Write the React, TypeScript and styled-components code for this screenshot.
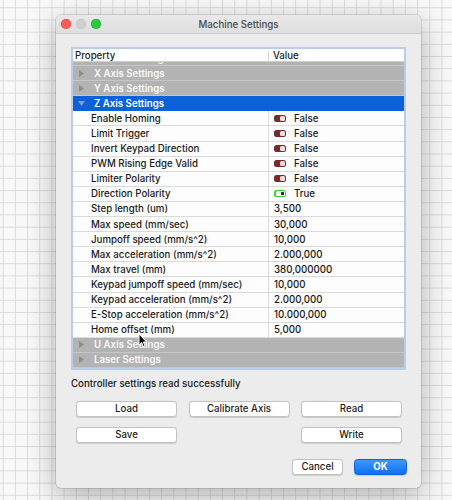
import React, { useLayoutEffect, useRef } from "react";
import styled, { createGlobalStyle } from "styled-components";

const Global = createGlobalStyle`
  html, body {
    margin: 0;
    padding: 0;
    height: 100%;
  }
  body {
    background-color: #f8f8f8;
    background-image:
      linear-gradient(to right, #dadada 1px, transparent 1px),
      linear-gradient(to bottom, #dadada 1px, transparent 1px);
    background-size: 12.19px 12.19px;
    background-position: 2.7px 7.3px;
    font-family: "Inter", "Liberation Sans", sans-serif;
    -webkit-font-smoothing: antialiased;
  }
`;

const Page = styled.div`
  padding: 15px 0 0 56px;
`;

const Window = styled.div`
  position: relative;
  width: 365px;
  height: 473px;
  background: #ececec;
  border-radius: 5px;
  box-shadow: 0 0 0 0.5px rgba(0, 0, 0, 0.22), 0 8px 30px rgba(0, 0, 0, 0.3);
  display: flex;
  flex-direction: column;
  overflow: hidden;
`;

const TitleBar = styled.div`
  position: relative;
  height: 18px;
  flex: none;
  background: linear-gradient(#e8e8e8, #dedede);
  border-bottom: 1px solid #cdcdcd;
  display: flex;
  align-items: center;
  justify-content: center;
`;

const Lights = styled.div`
  position: absolute;
  left: 5px;
  top: 4px;
  display: flex;
  gap: 5px;
`;

const Light = styled.span<{ $c: string; $b: string }>`
  width: 10px;
  height: 10px;
  border-radius: 50%;
  background: ${(p) => p.$c};
  box-shadow: inset 0 0 0 0.5px ${(p) => p.$b};
`;

const Title = styled.div`
  font-size: 9.7px;
  color: #4b4b4b;
  font-weight: 500;
`;

const Content = styled.div`
  flex: 1;
  display: flex;
  flex-direction: column;
  padding: 13px 14px 0 15px;
`;

const Table = styled.div`
  width: 331px;
  height: 319px;
  border: 2px solid #b9cde8;
  background: #ffffff;
  display: flex;
  flex-direction: column;
  flex: none;
`;

const Header = styled.div`
  height: 12px;
  flex: none;
  display: grid;
  grid-template-columns: 195px 1fr;
  border-bottom: 1px solid #cfcfcf;
  background: #fff;
  font-size: 9.7px;
  font-weight: 500;
  color: #1e1e1e;
`;

const HeadCell = styled.div<{ $divider?: boolean }>`
  display: flex;
  align-items: center;
  padding-left: ${(p) => (p.$divider ? "4px" : "2px")};
  border-left: ${(p) => (p.$divider ? "1px solid #d6d6d6" : "none")};
  margin-top: ${(p) => (p.$divider ? "2px" : "0")};
  line-height: 1;
  padding-bottom: ${(p) => (p.$divider ? "2px" : "0")};
`;

const Body = styled.div`
  flex: 1;
  overflow: hidden;
`;

const GroupRow = styled.div<{ $selected?: boolean }>`
  height: 15.1px;
  box-sizing: border-box;
  display: flex;
  align-items: center;
  background: ${(p) => (p.$selected ? "#0b61d8" : "#b3b3b3")};
  border-bottom: 1px solid ${(p) => (p.$selected ? "#0b61d8" : "#c6c6c6")};
  color: ${(p) => (p.$selected ? "#ffffff" : "#f8f8f8")};
  font-size: 9.7px;
  font-weight: 600;
`;

const Arrow = styled.span<{ $open?: boolean }>`
  width: 21px;
  flex: none;
  display: flex;
  justify-content: center;
  padding-right: 4px;
  box-sizing: border-box;
  svg {
    display: block;
  }
  color: ${(p) => (p.$open ? "#8d9cb6" : "#8c8c8c")};
`;

const ChildRow = styled.div`
  height: 15.1px;
  box-sizing: border-box;
  display: grid;
  grid-template-columns: 195px 1fr;
  border-bottom: 1px solid #dadada;
  background: #fdfdfd;
  font-size: 9.7px;
  font-weight: 500;
  color: #1b1b1b;
`;

const PropCell = styled.div`
  display: flex;
  align-items: center;
  padding-left: 18px;
  white-space: nowrap;
`;

const ValueCell = styled.div`
  display: flex;
  align-items: center;
  gap: 8px;
  padding-left: 5px;
  border-left: 1px solid #dadada;
  white-space: nowrap;
`;

const Toggle = styled.span<{ $on: boolean }>`
  position: relative;
  width: 12px;
  height: 7px;
  border-radius: 2.5px;
  flex: none;
  background: ${(p) => (p.$on ? "#3bd03b" : "#7a282b")};
`;

const Knob = styled.span<{ $on: boolean }>`
  position: absolute;
  top: 1px;
  bottom: 1px;
  border-radius: 1.5px;
  ${(p) =>
    p.$on
      ? `left: 1.5px; right: 1.5px; background: #f4fff4;`
      : `right: 1px; width: 5px; background: #f1e2e2;`}
`;

const Dot = styled.span`
  position: absolute;
  right: 2.5px;
  top: 2px;
  width: 3px;
  height: 3px;
  border-radius: 0.5px;
  background: #143d14;
`;

const Status = styled.div`
  margin-top: 6px;
  height: 14px;
  display: flex;
  align-items: center;
  font-size: 9.7px;
  font-weight: 500;
  color: #1a1a1a;
`;

const ButtonGrid = styled.div`
  margin: 11px 0 0 5px;
  display: grid;
  grid-template-columns: repeat(3, 101px);
  column-gap: 11.5px;
  row-gap: 10px;
`;

const Button = styled.button<{ $primary?: boolean; $w?: number }>`
  height: 16px;
  width: ${(p) => (p.$w ? `${p.$w}px` : "auto")};
  padding: 0;
  border-radius: 3.5px;
  font-family: inherit;
  font-size: 9.7px;
  font-weight: ${(p) => (p.$primary ? 700 : 500)};
  color: ${(p) => (p.$primary ? "#ffffff" : "#1d1d1d")};
  background: ${(p) =>
    p.$primary ? "linear-gradient(#3e98fc, #0f6ff3)" : "#ffffff"};
  border: 0.5px solid ${(p) => (p.$primary ? "#0a64e0" : "#c2c2c2")};
  box-shadow: 0 0.5px 1px rgba(0, 0, 0, 0.14);
  display: flex;
  align-items: center;
  justify-content: center;
  line-height: 1;
`;

const Spacer = styled.div``;

const DialogButtons = styled.div`
  margin-top: 16px;
  display: flex;
  justify-content: flex-end;
  gap: 11px;
`;

const Cursor = styled.svg`
  position: absolute;
  left: 82px;
  top: 318px;
  pointer-events: none;
`;

type Child = { name: string; value: string; toggle?: boolean; on?: boolean };

const zChildren: Child[] = [
  { name: "Enable Homing", value: "False", toggle: true, on: false },
  { name: "Limit Trigger", value: "False", toggle: true, on: false },
  { name: "Invert Keypad Direction", value: "False", toggle: true, on: false },
  { name: "PWM Rising Edge Valid", value: "False", toggle: true, on: false },
  { name: "Limiter Polarity", value: "False", toggle: true, on: false },
  { name: "Direction Polarity", value: "True", toggle: true, on: true },
  { name: "Step length (um)", value: "3,500" },
  { name: "Max speed (mm/sec)", value: "30,000" },
  { name: "Jumpoff speed (mm/s^2)", value: "10,000" },
  { name: "Max acceleration (mm/s^2)", value: "2.000,000" },
  { name: "Max travel (mm)", value: "380,000000" },
  { name: "Keypad jumpoff speed (mm/sec)", value: "10,000" },
  { name: "Keypad acceleration (mm/s^2)", value: "2.000,000" },
  { name: "E-Stop acceleration (mm/s^2)", value: "10.000,000" },
  { name: "Home offset (mm)", value: "5,000" },
];

const RightTri = () => (
  <svg width="5" height="7" viewBox="0 0 5 7">
    <path d="M0 0 L5 3.5 L0 7 Z" fill="currentColor" />
  </svg>
);

const DownTri = () => (
  <svg width="7" height="5" viewBox="0 0 7 5">
    <path d="M0 0 L7 0 L3.5 5 Z" fill="currentColor" />
  </svg>
);

const Group = ({ label, open }: { label: string; open?: boolean }) => (
  <GroupRow $selected={open}>
    <Arrow $open={open}>{open ? <DownTri /> : <RightTri />}</Arrow>
    <span>{label}</span>
  </GroupRow>
);

export default function App() {
  const bodyRef = useRef<HTMLDivElement>(null);
  useLayoutEffect(() => {
    if (bodyRef.current) bodyRef.current.scrollTop = 10.6;
  }, []);

  return (
    <>
      <Global />
      <Page>
        <Window>
          <TitleBar>
            <Lights>
              <Light $c="#fc5f57" $b="#e0443e" />
              <Light $c="#d0d0d0" $b="#bdbdbd" />
              <Light $c="#2dc840" $b="#1aab29" />
            </Lights>
            <Title>Machine Settings</Title>
          </TitleBar>
          <Content>
            <Table>
              <Header>
                <HeadCell>Property</HeadCell>
                <HeadCell $divider>Value</HeadCell>
              </Header>
              <Body ref={bodyRef}>
                <Group label="Vendor Settings" />
                <Group label="X Axis Settings" />
                <Group label="Y Axis Settings" />
                <Group label="Z Axis Settings" open />
                {zChildren.map((c) => (
                  <ChildRow key={c.name}>
                    <PropCell>{c.name}</PropCell>
                    <ValueCell>
                      {c.toggle && (
                        <Toggle $on={!!c.on}>
                          <Knob $on={!!c.on} />
                          {c.on && <Dot />}
                        </Toggle>
                      )}
                      <span>{c.value}</span>
                    </ValueCell>
                  </ChildRow>
                ))}
                <Group label="U Axis Settings" />
                <Group label="Laser Settings" />
              </Body>
            </Table>
            <Status>Controller settings read successfully</Status>
            <ButtonGrid>
              <Button>Load</Button>
              <Button>Calibrate Axis</Button>
              <Button>Read</Button>
              <Button>Save</Button>
              <Spacer />
              <Button>Write</Button>
            </ButtonGrid>
            <DialogButtons>
              <Button $w={51}>Cancel</Button>
              <Button $w={53} $primary>
                OK
              </Button>
            </DialogButtons>
          </Content>
          <Cursor width="10" height="15" viewBox="0 0 10 15">
            <path
              d="M1 1 L1 12 L3.6 9.6 L5.4 13.6 L7 12.9 L5.3 9 L8.6 9 Z"
              fill="#000"
              stroke="#fff"
              strokeWidth="1"
              strokeLinejoin="round"
            />
          </Cursor>
        </Window>
      </Page>
    </>
  );
}
